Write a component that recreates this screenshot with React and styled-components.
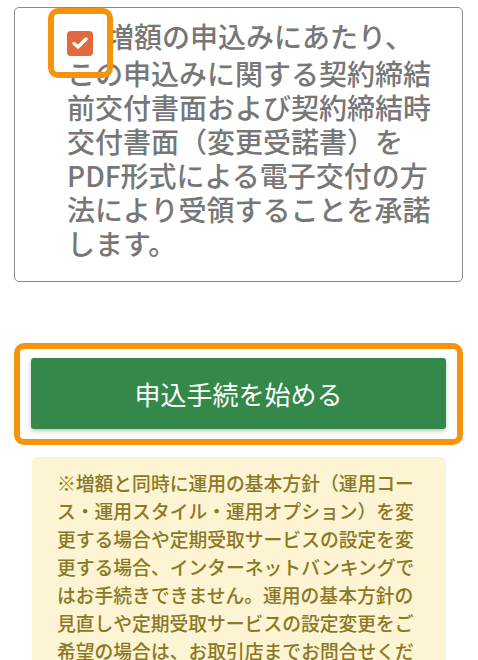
import React from "react";
import styled, { createGlobalStyle } from "styled-components";

const GlobalStyle = createGlobalStyle`
  html, body {
    margin: 0;
    padding: 0;
    background: #ffffff;
  }
  body {
    font-family: "Noto Sans CJK JP", "Noto Sans", sans-serif;
  }
`;

const Page = styled.div`
  width: 478px;
  height: 660px;
  overflow: hidden;
  padding: 7px 15px 0 14px;
  box-sizing: border-box;
`;

const ConsentBox = styled.div`
  border: 1.5px solid #8c8c8c;
  border-radius: 5px;
  padding: 11px 0 22px 52px;
  height: 275px;
  box-sizing: border-box;
`;

const ConsentText = styled.p`
  margin: 0;
  font-size: 28px;
  line-height: 34px;
  font-weight: 500;
  color: #777777;
  white-space: nowrap;
`;

const CheckWrap = styled.span`
  position: relative;
  display: inline-block;
  width: 26px;
  height: 25px;
  margin-right: 13px;
  vertical-align: -3px;
`;

const CheckBox = styled.span`
  display: flex;
  align-items: center;
  justify-content: center;
  width: 26px;
  height: 25px;
  border-radius: 4px;
  background: #e1693c;
`;

const Highlight = styled.span`
  position: absolute;
  top: ${(p) => p.$inset[0]}px;
  right: ${(p) => p.$inset[1]}px;
  bottom: ${(p) => p.$inset[2]}px;
  left: ${(p) => p.$inset[3]}px;
  border: 6px solid #f5920e;
  border-radius: 10px;
  pointer-events: none;
`;

const ButtonFrame = styled.div`
  margin-top: 61px;
  border: 6px solid #f5920e;
  border-radius: 10px;
  padding: 9px 11px 10px 11px;
`;

const StartButton = styled.button`
  display: flex;
  align-items: center;
  justify-content: center;
  width: 100%;
  height: 71px;
  border: none;
  border-radius: 3px;
  background: #34884a;
  color: #ffffff;
  font-family: "Noto Sans CJK JP", "Noto Sans", sans-serif;
  font-size: 26px;
  font-weight: 400;
  box-shadow: 0 2px 4px rgba(0, 0, 0, 0.25);
  cursor: pointer;
`;

const Note = styled.div`
  margin: 12px 17px 0 18px;
  background: #fcf4d2;
  border-radius: 5px;
  padding: 12px 0 20px 25px;
`;

const NoteText = styled.p`
  margin: 0;
  font-size: 18.8px;
  line-height: 28px;
  font-weight: 500;
  color: #8a7825;
  white-space: nowrap;
`;

const consentLines = [
  "この申込みに関する契約締結",
  "前交付書面および契約締結時",
  "交付書面（変更受諾書）を",
  "PDF形式による電子交付の方",
  "法により受領することを承諾",
  "します。",
];

const noteLines = [
  "※増額と同時に運用の基本方針（運用コー",
  "ス・運用スタイル・運用オプション）を変",
  "更する場合や定期受取サービスの設定を変",
  "更する場合、インターネットバンキングで",
  "はお手続きできません。運用の基本方針の",
  "見直しや定期受取サービスの設定変更をご",
  "希望の場合は、お取引店までお問合せくだ",
  "さい。",
];

const CheckIcon = () => (
  <svg width="18" height="16" viewBox="0 0 18 16">
    <path
      d="M3 8.5 L7 12 L15 4"
      fill="none"
      stroke="#ffffff"
      strokeWidth="3.4"
      strokeLinecap="round"
      strokeLinejoin="round"
    />
  </svg>
);

const App = () => {
  return (
    <>
      <GlobalStyle />
      <Page>
        <ConsentBox>
          <ConsentText>
            <CheckWrap>
              <CheckBox>
                <CheckIcon />
              </CheckBox>
              <Highlight $inset={[-23, -20, -22, -19]} />
            </CheckWrap>
            増額の申込みにあたり、
            {consentLines.map((line) => (
              <React.Fragment key={line}>
                <br />
                {line}
              </React.Fragment>
            ))}
          </ConsentText>
        </ConsentBox>

        <ButtonFrame>
          <StartButton type="button">申込手続を始める</StartButton>
        </ButtonFrame>

        <Note>
          <NoteText>
            {noteLines.map((line, i) => (
              <React.Fragment key={line}>
                {i > 0 && <br />}
                {line}
              </React.Fragment>
            ))}
          </NoteText>
        </Note>
      </Page>
    </>
  );
};

export default App;
